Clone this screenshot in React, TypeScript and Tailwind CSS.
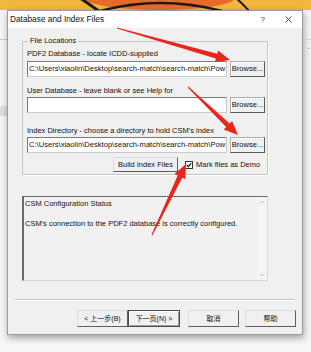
import React from "react";

type Pt = [number, number];

function arrowPoints(t: Pt, tip: Pt, headLen = 13, headW = 11, tailW = 1, baseW = 4.5): string {
  const dx = tip[0] - t[0];
  const dy = tip[1] - t[1];
  const len = Math.hypot(dx, dy);
  const ux = dx / len;
  const uy = dy / len;
  const nx = -uy;
  const ny = ux;
  const bx = tip[0] - ux * headLen;
  const by = tip[1] - uy * headLen;
  const p = (x: number, y: number) => `${x.toFixed(1)},${y.toFixed(1)}`;
  return [
    p(t[0] + nx * tailW / 2, t[1] + ny * tailW / 2),
    p(bx + nx * baseW / 2, by + ny * baseW / 2),
    p(bx + nx * headW / 2, by + ny * headW / 2),
    p(tip[0], tip[1]),
    p(bx - nx * headW / 2, by - ny * headW / 2),
    p(bx - nx * baseW / 2, by - ny * baseW / 2),
    p(t[0] - nx * tailW / 2, t[1] - ny * tailW / 2),
  ].join(" ");
}

function Browse() {
  return (
    <div className="w-[35px] h-[16px] flex items-center justify-center border border-[#adadad] border-r-[#5a5a5a] border-b-[#5a5a5a] bg-[#f0f0f0] shadow-[inset_1px_1px_0_#ffffff] text-[7.5px] leading-none text-[#111]">
      Browse...
    </div>
  );
}

function PathInput({ value }: { value?: string }) {
  return (
    <div className="w-[200px] h-[16px] bg-white border border-[#c9c9c9] border-t-[#7a7a7a] border-l-[#7a7a7a] overflow-hidden whitespace-nowrap pl-[1px] flex items-center text-[7.6px] leading-none text-[#111]">
      {value}
    </div>
  );
}

function WinButton({ label, isDefault }: { label: string; isDefault?: boolean }) {
  return (
    <div
      className={
        isDefault
          ? "w-[52px] h-[17px] flex items-center justify-center border border-[#4a4a4a] bg-[#f0f0f0] shadow-[inset_1px_1px_0_#ffffff,inset_-1px_-1px_0_#a0a0a0] text-[7px] leading-none text-[#111]"
          : "w-[51px] h-[17px] flex items-center justify-center border border-[#dcdcdc] border-r-[#5e5e5e] border-b-[#5e5e5e] bg-[#f0f0f0] text-[7px] leading-none text-[#111]"
      }
    >
      {label}
    </div>
  );
}

const PATH = "C:\\Users\\xiaolin\\Desktop\\search-match\\search-match\\Pow";

export default function App() {
  return (
    <div className="relative w-[311px] h-[352px] overflow-hidden bg-[#f6f6f6] font-['Liberation_Sans','Noto_Sans_CJK_SC',sans-serif] text-[#111]">
      {/* wallpaper strip */}
      <div className="h-[10px] bg-[#f1b53c]">
        <svg width="311" height="10" viewBox="0 0 311 10">
          <rect x="0" y="0" width="311" height="10" fill="#f2b73e" />
          <ellipse cx="160" cy="-2" rx="75" ry="12" fill="#e86a2b" />
          <path d="M80 -2 Q92 6 100 12" stroke="#1a1a1a" strokeWidth="3" fill="none" />
          <path d="M96 12 Q160 -6 226 12" stroke="#1a1a1a" strokeWidth="2.5" fill="none" />
          <path d="M236 -2 Q244 5 250 12" stroke="#1a1a1a" strokeWidth="2" fill="none" />
        </svg>
      </div>

      <div className="flex">
        {/* left gutter */}
        <div className="w-[7px] flex flex-col">
          <div className="h-[29px]" />
          <div className="h-[1px] bg-[#c8c8c8]" />
          <div className="h-[66px]" />
          <div className="h-[10px] bg-[#dedede]" />
        </div>

        {/* dialog */}
        <div className="w-[297px] h-[325px] flex flex-col border border-[#9c9c9c] bg-[#f0f0f0] shadow-[1px_3px_7px_rgba(0,0,0,0.35)]">
          {/* title bar */}
          <div className="h-[17px] bg-white flex items-center pl-[2px] pr-[10px] shrink-0">
            <span className="text-[8.3px] leading-none text-[#111]">Database and Index Files</span>
            <span className="ml-auto text-[8px] leading-none text-[#333]">?</span>
            <svg className="ml-[20px]" width="7" height="7" viewBox="0 0 7 7">
              <path d="M0.5 0.5 L6.5 6.5 M6.5 0.5 L0.5 6.5" stroke="#333" strokeWidth="0.9" />
            </svg>
          </div>

          {/* body */}
          <div className="flex flex-col">
            <fieldset className="ml-[14px] mt-[8px] w-[246px] border border-[#c6c6c6] shadow-[1px_1px_0_#ffffff] pl-[4px] pb-[2px]">
              <legend className="ml-[1px] px-[2px] text-[7.5px] leading-[10px] text-[#111]">File Locations</legend>
              <div className="mt-[3px] text-[7.5px] leading-[10px] text-[#111]">PDF2 Database - locate ICDD-supplied</div>
              <div className="mt-[2px] flex items-center gap-[3px]">
                <PathInput value={PATH} />
                <Browse />
              </div>
              <div className="mt-[9px] text-[7.5px] leading-[10px] text-[#111]">User Database - leave blank or see Help for</div>
              <div className="mt-[1px] flex items-center gap-[3px]">
                <PathInput />
                <Browse />
              </div>
              <div className="mt-[13px] text-[7.5px] leading-[10px] text-[#111]">Index Directory - choose a directory to hold CSM's index</div>
              <div className="mt-[1px] flex items-center gap-[3px]">
                <PathInput value={PATH} />
                <Browse />
              </div>
              <div className="mt-[4px] flex items-center">
                <div className="ml-[86px] w-[65px] h-[15px] flex items-center justify-center border border-[#dcdcdc] border-r-[#5e5e5e] border-b-[#5e5e5e] bg-[#f0f0f0] text-[7.5px] leading-none text-[#111]">
                  Build Index Files
                </div>
                <div className="ml-[7px] w-[8px] h-[8px] border border-[#333] bg-white flex items-center justify-center">
                  <svg width="6" height="6" viewBox="0 0 6 6">
                    <path d="M0.8 3 L2.4 4.6 L5.2 1.2" stroke="#111" strokeWidth="1.2" fill="none" />
                  </svg>
                </div>
                <span className="ml-[3px] text-[7.5px] leading-none text-[#111]">Mark files as Demo</span>
              </div>
            </fieldset>

            {/* status box */}
            <div className="ml-[14px] mt-[21px] w-[246px] h-[85px] flex border border-[#d8d8d8] border-t-[#6a6a6a] border-l-[#6a6a6a] border-l-2 bg-[#f1f1f1]">
              <div className="flex-1 pl-[1px] pt-[2px] flex flex-col text-[7.5px] leading-[10px] text-[#111]">
                <div>CSM Configuration Status</div>
                <div className="mt-[10px]">CSM's connection to the PDF2 database is correctly configured.</div>
              </div>
              <div className="w-[10px] flex flex-col items-center justify-between py-[3px] bg-[#f4f4f4]">
                <svg width="6" height="4" viewBox="0 0 6 4">
                  <path d="M0.5 3.5 L3 1 L5.5 3.5" stroke="#b8b8b8" strokeWidth="0.8" fill="none" />
                </svg>
                <svg width="6" height="4" viewBox="0 0 6 4">
                  <path d="M0.5 0.5 L3 3 L5.5 0.5" stroke="#b8b8b8" strokeWidth="0.8" fill="none" />
                </svg>
              </div>
            </div>

            {/* separator */}
            <div className="mx-[7px] mt-[18px] h-[1px] bg-[#c4c4c4] shadow-[0_1px_0_#ffffff]" />

            {/* buttons */}
            <div className="mt-[10px] flex justify-end pr-[6px]">
              <WinButton label="< 上一步(B)" />
              <WinButton label="下一页(N) >" isDefault />
              <div className="w-[8px]" />
              <WinButton label="取消" />
              <div className="w-[6px]" />
              <WinButton label="帮助" />
            </div>
          </div>
        </div>

        {/* right gutter */}
        <div className="flex-1 flex flex-col">
          <div className="h-[29px]" />
          <div className="h-[1px] bg-[#d0d0d0]" />
          <div className="pl-[3px] pt-[4px] text-[6px] leading-none text-[#888]">⌄</div>
        </div>
      </div>

      {/* red annotation arrows */}
      <svg className="absolute inset-0 pointer-events-none" width="311" height="352" viewBox="0 0 311 352">
        <polygon points={arrowPoints([117, 28], [230, 60], 14, 12, 1, 5)} fill="#e8261c" />
        <polygon points={arrowPoints([188, 87], [238, 135], 14, 12, 1, 5)} fill="#e8261c" />
        <polygon points={arrowPoints([152, 235], [186, 164], 14, 12, 1, 5)} fill="#e8261c" />
      </svg>
    </div>
  );
}
